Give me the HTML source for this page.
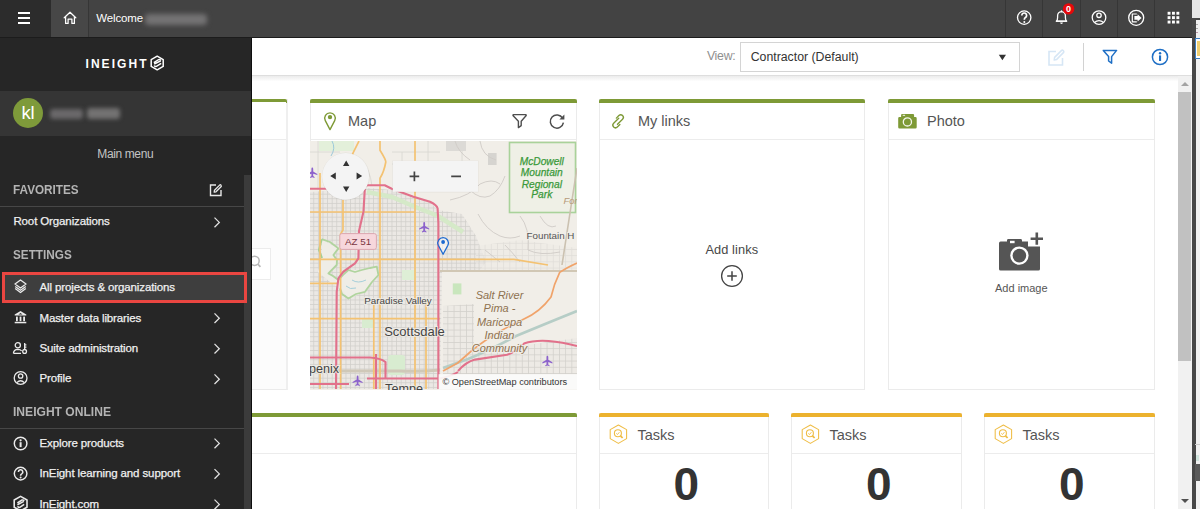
<!DOCTYPE html>
<html><head><meta charset="utf-8">
<style>
*{box-sizing:border-box;margin:0;padding:0}
html,body{width:1200px;height:509px;overflow:hidden;background:#fff;font-family:"Liberation Sans",sans-serif}
.abs{position:absolute}
.t{position:absolute;white-space:nowrap;line-height:1}
#top{position:absolute;left:0;top:0;width:1192px;height:37px;background:#434343}
#topline{position:absolute;left:0;top:37px;width:1192px;height:1px;background:#1c1c1c}
#ham{position:absolute;left:0;top:0;width:51px;height:37px;background:#2c2c2c}
#home{position:absolute;left:51px;top:0;width:37px;height:37px;background:#474747}
.vdiv{position:absolute;top:0;width:1px;height:37px;background:#363636}
#blurname{position:absolute;left:145px;top:13.5px;width:62px;height:11px;background:#747374;filter:blur(2.8px);border-radius:4px}
#side{position:absolute;left:0;top:38px;width:251px;height:471px;background:#262626}
#sideuser{position:absolute;left:0;top:91px;width:251px;height:45px;background:#353535}
#sideedge{position:absolute;left:251px;top:38px;width:1px;height:471px;background:#0e0e0e}
.sh{font-size:13.5px;color:#b4b4b4;font-weight:bold;transform-origin:0 0}
.si{font-size:11.5px;color:#f0f0f0;letter-spacing:-0.12px;-webkit-text-stroke:0.25px #f0f0f0}
.sdiv{position:absolute;left:0;width:244px;height:1px;background:#474747}
#main{position:absolute;left:252px;top:38px;width:940px;height:471px;background:#fff}
#hdr{position:absolute;left:252px;top:38px;width:940px;height:38px;background:#fff;border-bottom:1px solid #dedede}
#hdrsh{position:absolute;left:252px;top:76px;width:926px;height:5px;background:linear-gradient(#ececec,#fdfdfd)}
.card{position:absolute;background:#fff;border:1px solid #ebebeb;border-top:none}
.card .tb{position:absolute;left:-1px;right:-1px;top:0;height:3.5px;border-radius:2px 2px 0 0;background:#7e9a36}
.card .tb.y{background:#ecb22e}
.card .hd{position:absolute;left:0;right:0;top:3px;height:38px;border-bottom:1px solid #ececec}
.ttl{font-size:14.5px;color:#555}
</style></head><body>
<div id="main"></div>
<div id="hdr"></div>
<div id="hdrsh"></div>
<div class="t" style="left:706.9px;top:50.2px;font-size:12.3px;color:#8f8f8f;letter-spacing:-0.25px">View:</div>
<div class="abs" style="left:740px;top:42px;width:280px;height:30px;border:1px solid #d4d4d4;background:#fff"></div>
<div class="t" style="left:750.7px;top:51.2px;font-size:12.3px;color:#333">Contractor (Default)</div>
<svg class="abs" style="left:998px;top:54px" width="9" height="7" viewBox="0 0 9 7"><path d="M0.8 0.8 H8 L4.4 6.2 Z" fill="#333"/></svg>
<svg class="abs" style="left:1047px;top:48px" width="19" height="19" viewBox="0 0 19 19">
 <path d="M9 3.5 H2 V17 H15.5 V10" fill="none" stroke="#d6e6f5" stroke-width="1.6"/>
 <path d="M7.2 12 L7.6 9.4 L14.4 2.6 Q15.3 1.7 16.2 2.6 L16.4 2.8 Q17.3 3.7 16.4 4.6 L9.7 11.4 Z" fill="none" stroke="#d6e6f5" stroke-width="1.5" stroke-linejoin="round"/>
</svg>
<div class="abs" style="left:1082.5px;top:43px;width:1.5px;height:28px;background:#d2d2d2"></div>
<svg class="abs" style="left:1101px;top:48px" width="18" height="18" viewBox="0 0 18 18">
 <path d="M2.3 2.4 H15.6 L10.6 8.6 V15.2 L7.6 13 V8.6 Z" fill="none" stroke="#1f6fc5" stroke-width="1.5" stroke-linejoin="round"/>
</svg>
<svg class="abs" style="left:1150px;top:47px" width="20" height="20" viewBox="0 0 20 20">
 <circle cx="10" cy="10" r="7.6" fill="none" stroke="#1f6fc5" stroke-width="1.5"/>
 <rect x="9" y="8.4" width="2.1" height="5.6" fill="#1f6fc5"/>
 <circle cx="10.05" cy="6.2" r="1.2" fill="#1f6fc5"/>
</svg>

<!-- scrollbar right -->
<div class="abs" style="left:1178px;top:76px;width:14px;height:433px;background:#f1f1f1"></div>
<svg class="abs" style="left:1178px;top:76px" width="14" height="16" viewBox="0 0 14 16"><path d="M3 10 H11 L7 6 Z" fill="#a3a3a3"/></svg>
<div class="abs" style="left:1178px;top:92px;width:13px;height:269px;background:#c1c1c1"></div>
<svg class="abs" style="left:1178px;top:493px" width="14" height="16" viewBox="0 0 14 16"><path d="M3 6 H11 L7 10 Z" fill="#505050"/></svg>
<!-- far right strip -->
<div class="abs" style="left:1192px;top:0;width:8px;height:509px;background:#f1f1f1"></div>
<div class="abs" style="left:1192px;top:0;width:8px;height:18px;background:#e6e6e6"></div>
<div class="abs" style="left:1192px;top:18px;width:8px;height:2px;background:#474747"></div>
<div class="abs" style="left:1192px;top:18px;width:4px;height:491px;background:#474747"></div>
<div class="abs" style="left:1196px;top:24px;width:2px;height:1px;background:#aaa"></div>
<div class="abs" style="left:1196px;top:28px;width:2px;height:1px;background:#aaa"></div>
<div class="abs" style="left:1196px;top:32px;width:2px;height:1px;background:#b9a"></div>
<div class="abs" style="left:1195px;top:38px;width:6px;height:21px;border:1.5px solid #3a7cc0;border-right:none;background:#fff"></div>
<div class="abs" style="left:1197px;top:41px;width:3px;height:15px;background:#efcf72"></div>
<div class="abs" style="left:1195px;top:444px;width:5px;height:1px;background:#ccc"></div>
<div class="abs" style="left:1196px;top:455px;width:3px;height:6px;background:#cfe3dc"></div>
<div class="abs" style="left:1195px;top:464px;width:5px;height:17px;background:#5a5a5a"></div>
<!-- ============ CARDS ROW 1 ============ -->
<div class="card" style="left:21px;top:99px;width:267px;height:291px;background:#fcfcfc;border-right:2px solid #efefef"><div class="tb"></div><div class="hd" style="background:#fff"></div></div>
<div class="card" style="left:310px;top:99px;width:267px;height:291px"><div class="tb"></div><div class="hd"></div></div>
<div class="card" style="left:599px;top:99px;width:266px;height:291px"><div class="tb"></div><div class="hd"></div></div>
<div class="card" style="left:888px;top:99px;width:267px;height:291px"><div class="tb"></div><div class="hd"></div></div>
<!-- ROW 2 -->
<div class="card" style="left:21px;top:413px;width:556px;height:120px"><div class="tb"></div><div class="hd"></div></div>
<div class="card" style="left:599px;top:413px;width:170px;height:120px"><div class="tb y"></div><div class="hd"></div></div>
<div class="card" style="left:791px;top:413px;width:171px;height:120px"><div class="tb y"></div><div class="hd"></div></div>
<div class="card" style="left:984px;top:413px;width:171px;height:120px"><div class="tb y"></div><div class="hd"></div></div>

<!-- card titles -->
<svg class="abs" style="left:322.5px;top:111px" width="14" height="20" viewBox="0 0 14 20">
 <path d="M7 18.6 L2.3 9.6 A5.3 5.3 0 1 1 11.7 9.6 Z" fill="none" stroke="#7e9a36" stroke-width="1.4" stroke-linejoin="round"/>
 <circle cx="7" cy="6.1" r="2.2" fill="#7e9a36"/>
</svg>
<div class="t ttl" style="left:348px;top:114px">Map</div>
<svg class="abs" style="left:511px;top:112px" width="17" height="18" viewBox="0 0 17 18">
 <path d="M2.6 2.6 H14.6 Q15.6 2.8 15 3.8 L10.2 9.2 V13.6 L7.4 15.6 V9.2 L2.2 3.8 Q1.6 2.8 2.6 2.6 Z" fill="none" stroke="#4e4e4e" stroke-width="1.4" stroke-linejoin="round"/>
</svg>
<svg class="abs" style="left:548px;top:112px" width="18" height="18" viewBox="0 0 18 18">
 <path d="M14.6 6.2 A6.6 6.6 0 1 0 15.4 10.6" fill="none" stroke="#4e4e4e" stroke-width="1.5"/>
 <path d="M16.4 2.6 V7.6 H11.4 Z" fill="#4e4e4e"/>
</svg>

<svg class="abs" style="left:609px;top:112px" width="18" height="18" viewBox="0 0 18 18">
 <g fill="none" stroke="#7e9a36" stroke-width="1.35" stroke-linecap="round" transform="translate(9.1 9.3) rotate(-45)">
  <path d="M2.6 -1.7 H-4.6 A2.6 2.6 0 0 0 -4.6 3.5 H-1"/>
  <path d="M-2.6 1.7 H4.6 A2.6 2.6 0 0 0 4.6 -3.5 H1"/>
 </g>
</svg>
<div class="t ttl" style="left:637.9px;top:113.5px">My links</div>

<svg class="abs" style="left:898px;top:113px" width="20" height="17" viewBox="0 0 20 17">
 <path d="M0.2 5.2 Q0.2 3.9 1.5 3.9 H3.1 V2.1 Q3.1 1 4.2 1 H15 Q16.1 1 16.1 2.1 V3.9 H17.4 Q18.7 3.9 18.7 5.2 V14.3 Q18.7 15.5 17.4 15.5 H1.5 Q0.2 15.5 0.2 14.3 Z" fill="#7e9a36"/>
 <circle cx="9.4" cy="8.9" r="4.1" fill="none" stroke="#f4f6ec" stroke-width="1.3"/>
 <rect x="4.7" y="1.8" width="2.4" height="1" fill="#f4f6ec"/>
</svg>
<div class="t ttl" style="left:927px;top:113.5px">Photo</div>

<!-- my links body -->
<div class="t" style="left:705.4px;top:244.2px;font-size:12.8px;color:#484848;letter-spacing:0.1px">Add links</div>
<svg class="abs" style="left:720px;top:264px" width="24" height="24" viewBox="0 0 24 24">
 <circle cx="12" cy="12" r="10.4" fill="none" stroke="#444" stroke-width="1.3"/>
 <path d="M12 7.2 V16.8 M7.2 12 H16.8" stroke="#444" stroke-width="1.5"/>
</svg>
<!-- photo body -->
<svg class="abs" style="left:997px;top:231px" width="48" height="41" viewBox="0 0 48 41">
 <path d="M2 12.2 Q2 10.6 3.6 10.6 H10 V9.4 Q10 8 11.4 8 H23.6 Q25 8 25 9.4 V10.6 H31 V15.6 H43 V38 Q43 39.6 41.4 39.6 H3.6 Q2 39.6 2 38 Z" fill="#555"/>
 <circle cx="22.4" cy="24.6" r="9.2" fill="#fff"/>
 <circle cx="22.4" cy="24.6" r="6.8" fill="#555"/>
 <rect x="13" y="9.8" width="4.6" height="2.4" fill="#fff"/>
 <path d="M39.8 1.6 V13.8 M33.6 7.8 H46" stroke="#555" stroke-width="2.6"/>
</svg>
<div class="t" style="left:995px;top:282.6px;font-size:11px;color:#555">Add image</div>

<!-- tasks -->
<svg class="abs" style="left:608px;top:423px" width="21" height="23" viewBox="0 0 21 23">
 <path d="M10.4 2 L18.6 6.6 V15.6 L10.4 20.4 L2.2 15.6 V6.6 Z" fill="none" stroke="#efbd45" stroke-width="1.05" stroke-linejoin="round"/>
 <circle cx="9.9" cy="10.2" r="3.5" fill="none" stroke="#efbd45" stroke-width="1.1"/>
 <path d="M12.5 12.8 L14.6 15" stroke="#efbd45" stroke-width="1.8"/>
 <path d="M8.3 10.4 L9.5 11.5 L11.4 9.2" fill="none" stroke="#efbd45" stroke-width="0.9"/>
</svg>
<div class="t ttl" style="left:637.5px;top:427.5px">Tasks</div>
<div class="t" style="left:673.5px;top:461px;font-size:46px;font-weight:bold;color:#333">0</div>

<svg class="abs" style="left:800px;top:423px" width="21" height="23" viewBox="0 0 21 23">
 <path d="M10.4 2 L18.6 6.6 V15.6 L10.4 20.4 L2.2 15.6 V6.6 Z" fill="none" stroke="#efbd45" stroke-width="1.05" stroke-linejoin="round"/>
 <circle cx="9.9" cy="10.2" r="3.5" fill="none" stroke="#efbd45" stroke-width="1.1"/>
 <path d="M12.5 12.8 L14.6 15" stroke="#efbd45" stroke-width="1.8"/>
 <path d="M8.3 10.4 L9.5 11.5 L11.4 9.2" fill="none" stroke="#efbd45" stroke-width="0.9"/>
</svg>
<div class="t ttl" style="left:829.5px;top:427.5px">Tasks</div>
<div class="t" style="left:866px;top:461px;font-size:46px;font-weight:bold;color:#333">0</div>

<svg class="abs" style="left:993px;top:423px" width="21" height="23" viewBox="0 0 21 23">
 <path d="M10.4 2 L18.6 6.6 V15.6 L10.4 20.4 L2.2 15.6 V6.6 Z" fill="none" stroke="#efbd45" stroke-width="1.05" stroke-linejoin="round"/>
 <circle cx="9.9" cy="10.2" r="3.5" fill="none" stroke="#efbd45" stroke-width="1.1"/>
 <path d="M12.5 12.8 L14.6 15" stroke="#efbd45" stroke-width="1.8"/>
 <path d="M8.3 10.4 L9.5 11.5 L11.4 9.2" fill="none" stroke="#efbd45" stroke-width="0.9"/>
</svg>
<div class="t ttl" style="left:1022.5px;top:427.5px">Tasks</div>
<div class="t" style="left:1059px;top:461px;font-size:46px;font-weight:bold;color:#333">0</div>

<!-- card1 search box fragment -->
<div class="abs" style="left:240px;top:248px;width:31px;height:32px;border:1px solid #ececec;border-left:none;background:#fff"></div>
<svg class="abs" style="left:244px;top:253px" width="20" height="20" viewBox="0 0 20 20"><circle cx="10.6" cy="7.8" r="4.6" fill="none" stroke="#b8b8b8" stroke-width="1.5"/><path d="M13.8 11 L16.4 13.8" stroke="#b8b8b8" stroke-width="1.8"/></svg>
<!-- MAP placeholder -->
<svg class="abs" style="left:310px;top:141px" width="267" height="249" viewBox="310 141 267 249">
<defs>
<pattern id="grid" x="0.5" y="0.5" width="4.6" height="4.6" patternUnits="userSpaceOnUse"><rect width="4.6" height="4.6" fill="#ebe8e4"/><path d="M0 0.4 H4.6 M0.4 0 V4.6" stroke="#d0cdc9" stroke-width="0.8"/></pattern>
<pattern id="grid2" x="1" y="1" width="6.2" height="6.2" patternUnits="userSpaceOnUse"><rect width="6.2" height="6.2" fill="#edeae5"/><path d="M0 0.4 H6.2 M0.4 0 V6.2" stroke="#d2cfcb" stroke-width="0.8"/></pattern>
<clipPath id="mc"><rect x="310" y="141" width="267" height="249"/></clipPath>
</defs>
<g clip-path="url(#mc)">
<rect x="310" y="141" width="267" height="249" fill="#f1eee8"/>
<path d="M310 192 L368 188 L392 190 L430 202 L438 210 L462 214 L476 236 L486 262 L480 270 L442 272 L440 389 L310 389 Z" fill="url(#grid)"/>
<path d="M476 246 L520 240 L577 248 L577 270 L476 270 Z" fill="url(#grid2)" opacity="0.55"/>
<path d="M443 306 L474 304 L474 348 L520 346 L577 338 L577 374 L443 374 Z" fill="url(#grid2)"/>
<path d="M310 152 H340" stroke="#d8d5d0" stroke-width="0.8" fill="none"/>
<path d="M318 141 V190" stroke="#d8d5d0" stroke-width="0.8" fill="none"/>
<path d="M392 152 H440" stroke="#d8d5d0" stroke-width="0.8" fill="none"/>
<path d="M392 164 H440" stroke="#d8d5d0" stroke-width="0.8" fill="none"/>
<path d="M402 152 V186" stroke="#d8d5d0" stroke-width="0.8" fill="none"/>
<path d="M428 141 V186" stroke="#d8d5d0" stroke-width="0.8" fill="none"/>
<path d="M360 160 Q370 168 372 186" stroke="#d8d5d0" stroke-width="0.8" fill="none"/>
<path d="M462 146 V190" stroke="#d8d5d0" stroke-width="0.8" fill="none"/>
<path d="M448 175 H478" stroke="#d8d5d0" stroke-width="0.8" fill="none"/>
<rect x="319" y="141" width="35" height="10" fill="#e3f0da"/>
<path d="M332 141 Q336 148 331 156" stroke="#9cc9da" stroke-width="1" fill="none"/>
<path d="M321.7 239.2 L338.4 248.4 L333.4 255 L336.7 265 L328.4 273.4 L338.4 280 L348.4 270 L361.8 270 L376.8 266.7 L378.4 275 L365 291.8 L348.4 298.5 L340 288.4 L330 282 L318 272 L322 256 Z" fill="#efede6"/>
<path d="M321.7 239.2 L330 242 L338.4 248.4 L333.4 255 L337 260 L336.7 265 L328.4 273.4 L333 276 L338.4 280 L344 274 L348.4 270 L355 272 L361.8 270 L370 268 L376.8 266.7 L378.4 275 L372 282 L365 291.8 L356 294 L348.4 298.5 L342 294 L340 288.4" stroke="#b0d49e" stroke-width="1.8" fill="none" stroke-linejoin="round"/>
<path d="M321.7 239.2 L319 250 L322 258" stroke="#a5cf93" stroke-width="2" fill="none"/>
<path d="M352 280 Q358 284 366 280 M346 286 Q350 290 356 288" stroke="#9ccbd8" stroke-width="0.9" fill="none"/>
<path d="M367 192 L392 197 L413 206 L438 216 L463 232" stroke="#d5e9c8" stroke-width="4.5" fill="none"/>
<rect x="452.8" y="283.4" width="8.6" height="11" fill="#c9e6bd"/>
<rect x="362" y="318" width="12" height="10" fill="#d8ecd0"/>
<rect x="402" y="270" width="14" height="10" fill="#deefd6"/>
<rect x="388" y="355" width="17" height="20" rx="3" fill="#d8ecd0"/>
<rect x="488" y="153" width="8.6" height="12" fill="#d6d4d0"/>
<rect x="446" y="141" width="20" height="10" fill="#dcdad6"/>
<path d="M478 214 Q486 230 500 236 Q510 240 520 236" stroke="#cfcbc6" stroke-width="0.9" fill="none"/>
<path d="M470 190 Q480 200 490 196 Q500 190 505 176" stroke="#cfcbc6" stroke-width="0.9" fill="none"/>
<path d="M455 141 Q458 152 470 160 M480 141 Q482 156 496 160" stroke="#cfcbc6" stroke-width="0.9" fill="none"/>
<path d="M520 216 Q530 228 528 250 Q540 256 560 252" stroke="#cfcbc6" stroke-width="0.9" fill="none"/>
<path d="M540 216 Q548 230 556 226" stroke="#cfcbc6" stroke-width="0.9" fill="none"/>
<path d="M505 245 Q512 252 520 262" stroke="#cfcbc6" stroke-width="0.9" fill="none"/>
<path d="M485 250 L500 262" stroke="#cfcbc6" stroke-width="0.9" fill="none"/>
<path d="M450 200 Q470 196 480 184 Q492 178 500 184" stroke="#cfcbc6" stroke-width="0.9" fill="none"/>
<rect x="509.5" y="142.5" width="66" height="70" fill="#eff0e6" stroke="#a9d29a" stroke-width="1.6"/>
<path d="M577 168 L572 200 L562 265" stroke="#cbc1b0" stroke-width="1.6" fill="none"/>
<path d="M440 271 H577" stroke="#d1c7b4" stroke-width="2.2" fill="none"/>
<path d="M577 311 Q540 326 516 336 Q490 350 468 359 L443 368" stroke="#b6cdc6" stroke-width="2.6" fill="none"/>
<path d="M310 371 H400 Q420 372 440 370" stroke="#cfc8b8" stroke-width="3" fill="none"/>
<path d="M320 173 V389" stroke="#f4c271" stroke-width="1.7" fill="none"/>
<path d="M343 200 V230 L340.6 234 V389" stroke="#f4c271" stroke-width="1.7" fill="none"/>
<path d="M380 141 V150.3 Q386 160 385.8 162 Q384 172 380 178.3 V389" stroke="#f4c271" stroke-width="1.7" fill="none"/>
<path d="M415 141 V389" stroke="#f4c271" stroke-width="1.7" fill="none"/>
<path d="M359 141 L353.2 152.7 L352 156" stroke="#f4c271" stroke-width="1.7" fill="none"/>
<path d="M310 212 H415" stroke="#f4c271" stroke-width="1.7" fill="none"/>
<path d="M310 259.3 H514 Q530 262 548 265" stroke="#f4c271" stroke-width="1.7" fill="none"/>
<path d="M310 283.4 H337" stroke="#f4c271" stroke-width="1.7" fill="none"/>
<path d="M310 318.7 H440" stroke="#f4c271" stroke-width="1.7" fill="none"/>
<path d="M426 300 V389" stroke="#f4c271" stroke-width="1.7" fill="none"/>
<path d="M373.8 305 V389" stroke="#f4c271" stroke-width="1.7" fill="none"/>
<path d="M577 263 Q566 268 559.7 272.4 Q554 284 551 297 Q540 312 524 319 Q505 328 492 336 Q480 344 472.5 350 L457.7 363 L443 371" stroke="#f0a36a" stroke-width="1.7" fill="none"/>
<path d="M310 188.8 H325 L368.3 185.3 H384.7 L391.7 188.8 L413.4 196.7 L430 201.7 Q437 205 437.6 208.4 L438.4 223.4 V389" stroke="#e2718b" stroke-width="2.1" fill="none" stroke-linejoin="round"/>
<path d="M364.8 189 L363.5 211.4 L359 231 L358.4 258.4 L355 263.4 L343.4 271.7 L338.4 278.4 L336.7 291.8 L336 389" stroke="#e2718b" stroke-width="2.1" fill="none" stroke-linejoin="round"/>
<path d="M310 357.5 H370 Q380 358 385.5 362 V378" stroke="#e2718b" stroke-width="2.1" fill="none" stroke-linejoin="round"/>
<path d="M367 378.5 H440 Q452 376 458 372" stroke="#e2718b" stroke-width="2.1" fill="none" stroke-linejoin="round"/>
<path d="M376 354 V389" stroke="#e2718b" stroke-width="2.1" fill="none" stroke-linejoin="round"/>
<path d="M310 384 H349" stroke="#e2718b" stroke-width="2.1" fill="none" stroke-linejoin="round"/>
<path d="M458 371 Q466 362 475 359.6 L507 354.7 Q516 352 524 343.6 Q534 340 548.6 341 Q562 342 577 346" stroke="#e2718b" stroke-width="2.1" fill="none" stroke-linejoin="round"/>
<path transform="translate(424.2 227) scale(1.0)" d="M0 -5 Q0.9 -5 0.9 -3.6 V-1 L5 1.5 V2.6 L0.9 1.2 V3.6 L2.2 4.6 V5.4 L0 4.8 L-2.2 5.4 V4.6 L-0.9 3.6 V1.2 L-5 2.6 V1.5 L-0.9 -1 V-3.6 Q-0.9 -5 0 -5 Z" fill="#8c62cc"/>
<path transform="translate(547.4 360.8) scale(1.0)" d="M0 -5 Q0.9 -5 0.9 -3.6 V-1 L5 1.5 V2.6 L0.9 1.2 V3.6 L2.2 4.6 V5.4 L0 4.8 L-2.2 5.4 V4.6 L-0.9 3.6 V1.2 L-5 2.6 V1.5 L-0.9 -1 V-3.6 Q-0.9 -5 0 -5 Z" fill="#8c62cc"/>
<path transform="translate(357.6 380.5) scale(1.0)" d="M0 -5 Q0.9 -5 0.9 -3.6 V-1 L5 1.5 V2.6 L0.9 1.2 V3.6 L2.2 4.6 V5.4 L0 4.8 L-2.2 5.4 V4.6 L-0.9 3.6 V1.2 L-5 2.6 V1.5 L-0.9 -1 V-3.6 Q-0.9 -5 0 -5 Z" fill="#8c62cc"/>
<path transform="translate(312.3 172.5) scale(1.0)" d="M0 -5 Q0.9 -5 0.9 -3.6 V-1 L5 1.5 V2.6 L0.9 1.2 V3.6 L2.2 4.6 V5.4 L0 4.8 L-2.2 5.4 V4.6 L-0.9 3.6 V1.2 L-5 2.6 V1.5 L-0.9 -1 V-3.6 Q-0.9 -5 0 -5 Z" fill="#8c62cc"/>
<text x="541.8" y="165.4" font-family="Liberation Sans" font-size="10.2" fill="#3a9a3a" text-anchor="middle" style="font-style:italic;" stroke="#3d9a3d" stroke-width="0.25">McDowell</text>
<text x="541.8" y="176.4" font-family="Liberation Sans" font-size="10.2" fill="#3a9a3a" text-anchor="middle" style="font-style:italic;" stroke="#3d9a3d" stroke-width="0.25">Mountain</text>
<text x="541.8" y="188" font-family="Liberation Sans" font-size="10.2" fill="#3a9a3a" text-anchor="middle" style="font-style:italic;" stroke="#3d9a3d" stroke-width="0.25">Regional</text>
<text x="541.8" y="198.4" font-family="Liberation Sans" font-size="10.2" fill="#3a9a3a" text-anchor="middle" style="font-style:italic;" stroke="#3d9a3d" stroke-width="0.25">Park</text>
<text x="563.5" y="204.3" font-family="Liberation Sans" font-size="9.5" fill="#b69a78" text-anchor="start" style="font-style:italic;" >For</text>
<text x="526.5" y="239.4" font-family="Liberation Sans" font-size="9.8" fill="#555" text-anchor="start" style="" stroke="#f1eee8" stroke-width="2" stroke-opacity="0.8" paint-order="stroke">Fountain H</text>
<text x="499.5" y="298.8" font-family="Liberation Sans" font-size="11" fill="#8e7250" text-anchor="middle" style="font-style:italic;" stroke="#f1eee8" stroke-width="2" stroke-opacity="0.8" paint-order="stroke">Salt River</text>
<text x="499.5" y="312.4" font-family="Liberation Sans" font-size="11" fill="#8e7250" text-anchor="middle" style="font-style:italic;" stroke="#f1eee8" stroke-width="2" stroke-opacity="0.8" paint-order="stroke">Pima -</text>
<text x="499.5" y="325.6" font-family="Liberation Sans" font-size="11" fill="#8e7250" text-anchor="middle" style="font-style:italic;" stroke="#f1eee8" stroke-width="2" stroke-opacity="0.8" paint-order="stroke">Maricopa</text>
<text x="499.5" y="339" font-family="Liberation Sans" font-size="11" fill="#8e7250" text-anchor="middle" style="font-style:italic;" stroke="#f1eee8" stroke-width="2" stroke-opacity="0.8" paint-order="stroke">Indian</text>
<text x="499.5" y="352.4" font-family="Liberation Sans" font-size="11" fill="#8e7250" text-anchor="middle" style="font-style:italic;" stroke="#f1eee8" stroke-width="2" stroke-opacity="0.8" paint-order="stroke">Community</text>
<text x="398" y="304" font-family="Liberation Sans" font-size="9.8" fill="#444" text-anchor="middle" style="" stroke="#f1eee8" stroke-width="2" stroke-opacity="0.8" paint-order="stroke">Paradise Valley</text>
<text x="414.5" y="336.4" font-family="Liberation Sans" font-size="13" fill="#444" text-anchor="middle" style="" stroke="#f1eee8" stroke-width="2" stroke-opacity="0.8" paint-order="stroke">Scottsdale</text>
<text x="309" y="372.6" font-family="Liberation Sans" font-size="12.6" fill="#444" text-anchor="start" style="" stroke="#f1eee8" stroke-width="2" stroke-opacity="0.8" paint-order="stroke">penix</text>
<text x="404" y="393" font-family="Liberation Sans" font-size="12.6" fill="#444" text-anchor="middle" style="" stroke="#f1eee8" stroke-width="2" stroke-opacity="0.8" paint-order="stroke">Tempe</text>
<rect x="339.8" y="233.6" width="36.6" height="15.8" rx="2" fill="#f7d7dc" stroke="#dba7b0" stroke-width="1"/>
<text x="358.1" y="245.4" font-family="Liberation Sans" font-size="9.8" fill="#7a3440" text-anchor="middle" style="" >AZ 51</text>
<path d="M443.1 254.3 L438.3 245.2 A5.3 5.3 0 1 1 447.9 245.2 Z" fill="#fff" fill-opacity="0.5" stroke="#1c6ad0" stroke-width="1.3" stroke-linejoin="round"/>
<circle cx="443.1" cy="242" r="1.9" fill="#1c6ad0"/>
<circle cx="345.8" cy="176.6" r="24" fill="#000" fill-opacity="0.06"/>
<circle cx="345.6" cy="176.4" r="23.4" fill="#f4f4f4"/>
<path d="M346.2 160.6 L349.4 166 H343 Z M346.2 192 L349.4 186.6 H343 Z M330.2 176 L335.8 172.6 V179.4 Z M362.2 176 L356.6 172.6 V179.4 Z" fill="#333"/>
<rect x="392.3" y="160.5" width="86.2" height="32" fill="#000" fill-opacity="0.05"/>
<rect x="392.8" y="160.8" width="85.2" height="31" fill="#f4f4f4"/>
<path d="M409.6 176.4 H419.2 M414.4 171.6 V181.2 M451.2 176.4 H461" stroke="#444" stroke-width="1.7"/>
<rect x="438.6" y="374.2" width="140" height="15.5" fill="#fbfbfa" fill-opacity="0.92"/>
<text x="442.4" y="384.8" font-family="Liberation Sans" font-size="9.2" fill="#333" text-anchor="start" style="" >© OpenStreetMap contributors</text>
</g></svg>
<!-- ============ TOP BAR ============ -->
<div id="top"></div>
<div id="ham"></div>
<div id="home"></div>
<div class="vdiv" style="left:88px"></div>
<div id="topline"></div>
<div class="abs" style="left:18px;top:12px;width:12px;height:2px;background:#fff"></div>
<div class="abs" style="left:18px;top:17px;width:12px;height:2px;background:#fff"></div>
<div class="abs" style="left:18px;top:22px;width:12px;height:2px;background:#fff"></div>
<svg class="abs" style="left:62.6px;top:11px" width="14" height="14" viewBox="0 0 14 14"><path d="M1.2 6.8 L7 1.2 L12.8 6.8 M2.6 5.6 V12.4 H5.1 V8 H8.9 V12.4 H11.4 V5.6" fill="none" stroke="#fff" stroke-width="1.25" stroke-linejoin="round" stroke-linecap="round"/></svg>
<div class="t" style="left:96.3px;top:13.4px;font-size:11.5px;color:#fff;letter-spacing:-0.15px">Welcome</div>
<div id="blurname"></div>

<div class="vdiv" style="left:1005px"></div>
<div class="vdiv" style="left:1042px"></div>
<div class="vdiv" style="left:1080px"></div>
<div class="vdiv" style="left:1117px"></div>
<div class="vdiv" style="left:1154px"></div>
<svg class="abs" style="left:1000px;top:0" width="192" height="37" viewBox="1000 0 192 37">
 <g fill="none" stroke="#fff" stroke-width="1.3">
  <circle cx="1024.2" cy="17.6" r="6.7"/>
  <path d="M1021.8 15.4 A2.4 2.4 0 1 1 1025.4 17.5 Q1024.3 18.2 1024.3 19.7" stroke-width="1.7"/>
  <path d="M1056.4 21.2 Q1057.6 20.2 1057.6 17.6 V15.8 Q1057.6 12 1061.5 11.6 Q1065.4 12 1065.4 15.8 V17.6 Q1065.4 20.2 1066.6 21.2 Z" stroke-linejoin="round"/>
  <circle cx="1099" cy="17.6" r="6.8"/>
  <circle cx="1099" cy="15.3" r="2.2"/>
  <path d="M1094.4 22.6 Q1099 18.6 1103.6 22.6"/>
  <circle cx="1136.2" cy="17.8" r="7.5"/>
  <path d="M1136.8 14 H1132.3 V21.8 H1136.8" stroke-width="1.2"/>
 </g>
 <path d="M1055.9 20.6 H1067.1 V21.9 H1055.9 Z" fill="#fff"/>
 <path d="M1060.1 22.6 H1062.9 A1.4 1.4 0 0 1 1060.1 22.6 Z" fill="#fff"/>
 <circle cx="1061.5" cy="11" r="0.8" fill="#fff"/>
 <path d="M1134.4 16.1 H1137.6 V14.3 L1141.6 17.9 L1137.6 21.5 V19.7 H1134.4 Z" fill="#fff"/>
 <circle cx="1024.3" cy="21.9" r="1" fill="#fff"/>
 <circle cx="1068.6" cy="8.9" r="5.7" fill="#e5080b"/>
 <text x="1068.6" y="12.1" font-family="Liberation Sans" font-weight="bold" font-size="9" fill="#fff" text-anchor="middle">0</text>
 <g fill="#fff">
  <rect x="1167.6" y="11.8" width="2.9" height="2.9"/><rect x="1172" y="11.8" width="2.9" height="2.9"/><rect x="1176.4" y="11.8" width="2.9" height="2.9"/>
  <rect x="1167.6" y="16.2" width="2.9" height="2.9"/><rect x="1172" y="16.2" width="2.9" height="2.9"/><rect x="1176.4" y="16.2" width="2.9" height="2.9"/>
  <rect x="1167.6" y="20.6" width="2.9" height="2.9"/><rect x="1172" y="20.6" width="2.9" height="2.9"/><rect x="1176.4" y="20.6" width="2.9" height="2.9"/>
 </g>
</svg>

<!-- ============ SIDEBAR ============ -->
<div id="side"></div>
<div id="sideuser"></div>
<div id="sideedge"></div>
<!-- logo -->
<div class="t" style="left:85.5px;top:58px;font-size:12px;font-weight:bold;color:#fff;letter-spacing:2.05px">INEIGHT</div>
<svg class="abs" style="left:150px;top:55px" width="15" height="16" viewBox="0 0 15 16">
 <path d="M7.2 1.2 L13.2 4.6 V11.4 L7.2 14.8 L1.2 11.4 V4.6 Z" fill="none" stroke="#fff" stroke-width="1.5" stroke-linejoin="round"/>
 <path d="M3.8 7.6 L8.6 4.6 Q10.4 4.2 10.6 5.6 M4.4 10.4 Q4.6 11.8 6.4 11.4 L11.2 8.4 M4.2 9 L10.8 5.8" fill="none" stroke="#fff" stroke-width="1.4"/>
</svg>
<!-- user -->
<div class="abs" style="left:13px;top:98px;width:30px;height:30px;border-radius:50%;background:#7e9a3a"></div>
<div class="t" style="left:21.5px;top:104px;font-size:18.5px;color:#fff;letter-spacing:-0.3px">kl</div>
<div class="abs" style="left:50px;top:108.5px;width:33px;height:10px;background:#6a686a;filter:blur(2.2px);border-radius:3px"></div>
<div class="abs" style="left:87px;top:107.5px;width:33px;height:11px;background:#737272;filter:blur(2.2px);border-radius:3px"></div>
<div class="t" style="left:97.3px;top:147.8px;font-size:12px;color:#c4c4c4;letter-spacing:-0.38px">Main menu</div>
<!-- scrollbar -->
<div class="abs" style="left:244px;top:175px;width:7px;height:334px;background:#3b3b3b"></div>

<div class="t sh" style="left:13.4px;top:183.2px;transform:scaleX(0.87)">FAVORITES</div>
<svg class="abs" style="left:209px;top:183px" width="14" height="14" viewBox="0 0 14 14">
 <path d="M7 2 H1.5 V12.5 H12 V7" fill="none" stroke="#e8e8e8" stroke-width="1.4"/>
 <path d="M5.2 9.2 L5.5 7.2 L10.6 2.1 Q11.3 1.4 12 2.1 L12.1 2.3 Q12.7 3 12 3.7 L7 8.8 Z" fill="none" stroke="#e8e8e8" stroke-width="1.3" stroke-linejoin="round"/>
</svg>
<div class="sdiv" style="top:206px"></div>
<div class="t si" style="left:13.4px;top:216.3px">Root Organizations</div>
<div class="t sh" style="left:13.4px;top:248px;transform:scaleX(0.87)">SETTINGS</div>

<!-- selected row -->
<div class="abs" style="left:2px;top:272px;width:245px;height:31px;background:#3e3e3e;border:3px solid #ea4641"></div>
<svg class="abs" style="left:14px;top:279px" width="13" height="15" viewBox="0 0 13 15">
 <g fill="none" stroke="#eaeaea" stroke-width="1.3" stroke-linejoin="round">
  <path d="M6.5 1 L12 5 L6.5 9 L1 5 Z"/>
  <path d="M1.2 7.4 L6.5 11.3 L11.8 7.4"/>
  <path d="M1.2 9.6 L6.5 13.6 L11.8 9.6"/>
 </g>
</svg>
<div class="t si" style="left:39.5px;top:281.6px">All projects &amp; organizations</div>

<svg class="abs" style="left:14px;top:310px" width="13" height="14" viewBox="0 0 13 14">
 <path d="M6.5 1 L12.3 4.6 V5.6 H0.7 V4.6 Z" fill="#eaeaea"/>
 <path d="M6.5 3 L8.6 4.4 H4.4 Z" fill="#262626"/>
 <rect x="2" y="6.6" width="1.8" height="4.6" fill="#eaeaea"/>
 <rect x="5.6" y="6.6" width="1.8" height="4.6" fill="#eaeaea"/>
 <rect x="9.2" y="6.6" width="1.8" height="4.6" fill="#eaeaea"/>
 <rect x="0.7" y="11.8" width="11.6" height="1.5" fill="#eaeaea"/>
</svg>
<div class="t si" style="left:39.5px;top:312.5px">Master data libraries</div>

<svg class="abs" style="left:12px;top:341px" width="16" height="14" viewBox="0 0 16 14">
 <g fill="none" stroke="#eaeaea" stroke-width="1.3">
  <circle cx="5.8" cy="4.2" r="2.6"/>
  <path d="M1.4 12.4 Q1.6 8.6 5.8 8.4 Q8.6 8.5 9.6 10 M1.4 12.4 H9"/>
  <circle cx="12.6" cy="10.4" r="1.9"/>
 </g>
 <path d="M12 2 H13.3 V3.3 H14.4 V4.6 H13.3 V5.4 H14.4 V6.7 H13.3 V8.4 H12 Z" fill="#eaeaea"/>
</svg>
<div class="t si" style="left:39.5px;top:342.9px">Suite administration</div>

<svg class="abs" style="left:13px;top:370px" width="16" height="16" viewBox="0 0 16 16">
 <g fill="none" stroke="#eaeaea" stroke-width="1.3">
  <circle cx="7.6" cy="8" r="6.4"/>
  <circle cx="7.6" cy="6" r="2.2"/>
  <path d="M3.8 12.6 Q7.6 9 11.4 12.6"/>
 </g>
</svg>
<div class="t si" style="left:39.5px;top:373.3px">Profile</div>

<div class="t sh" style="left:13.4px;top:404.8px;transform:scaleX(0.895)">INEIGHT ONLINE</div>
<div class="sdiv" style="top:428px"></div>

<svg class="abs" style="left:13px;top:436px" width="16" height="16" viewBox="0 0 16 16">
 <circle cx="7.6" cy="7.5" r="6.3" fill="none" stroke="#eaeaea" stroke-width="1.45"/>
 <rect x="6.6" y="6.2" width="2" height="4.9" fill="#eaeaea"/>
 <circle cx="7.6" cy="4.3" r="1.1" fill="#eaeaea"/>
</svg>
<div class="t si" style="left:39.5px;top:438px">Explore products</div>

<svg class="abs" style="left:13px;top:466px" width="16" height="16" viewBox="0 0 16 16">
 <circle cx="7.6" cy="7.6" r="6.3" fill="none" stroke="#eaeaea" stroke-width="1.45"/>
 <path d="M5.4 6 A2.2 2.2 0 1 1 8.7 7.9 Q7.6 8.5 7.6 9.7" fill="none" stroke="#eaeaea" stroke-width="1.6"/>
 <circle cx="7.6" cy="11.5" r="1" fill="#eaeaea"/>
</svg>
<div class="t si" style="left:39.5px;top:468.2px">InEight learning and support</div>

<svg class="abs" style="left:13px;top:495px" width="16" height="16" viewBox="0 0 16 16">
 <path d="M7.6 1.4 L14 5 V12.2 L7.6 15.8 L1.2 12.2 V5 Z" fill="none" stroke="#eaeaea" stroke-width="1.6" stroke-linejoin="round"/>
 <path d="M4.4 8 L9 5 Q10.8 4.6 11 6.2 M4.8 11.2 Q5 12.8 6.8 12.3 L11.2 9.4 M4.4 9.8 L10.8 6.4" fill="none" stroke="#eaeaea" stroke-width="1.5"/>
</svg>
<div class="t si" style="left:39.5px;top:498.6px">InEight.com</div>

<svg class="abs" style="left:210px;top:210px" width="14" height="300" viewBox="0 0 14 300">
 <g fill="none" stroke="#e0e0e0" stroke-width="1.3">
  <path d="M4.5 7.6 L9.3 12.4 L4.5 17.2"/>
  <path d="M4.5 103.4 L9.3 108.2 L4.5 113"/>
  <path d="M4.5 133.9 L9.3 138.7 L4.5 143.5"/>
  <path d="M4.5 164.4 L9.3 169.2 L4.5 174"/>
  <path d="M4.5 228.6 L9.3 233.4 L4.5 238.2"/>
  <path d="M4.5 259.1 L9.3 263.9 L4.5 268.7"/>
  <path d="M4.5 289.6 L9.3 294.4 L4.5 299.2"/>
 </g>
</svg>

</body></html>
